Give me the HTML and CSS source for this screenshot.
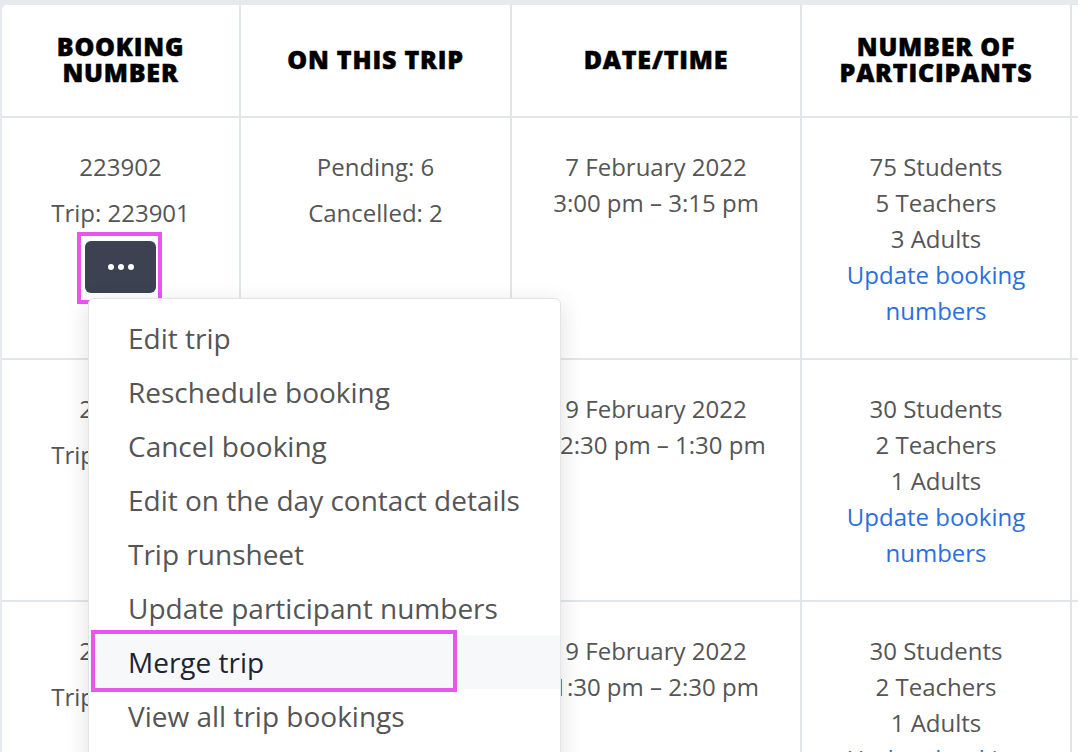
FILE: index.html
```html
<!DOCTYPE html>
<html lang="en">
<head>
  <meta charset="UTF-8">
  <meta name="viewport" content="width=device-width, initial-scale=1.0">
  <title>Bookings</title>
  <link rel="stylesheet" href="styles.css">
</head>
<body>
  <div class="card">
    <table class="bookings">
      <colgroup>
        <col class="col-booking">
        <col class="col-trip">
        <col class="col-date">
        <col class="col-people">
        <col class="col-extra">
      </colgroup>
      <thead>
        <tr>
          <th>Booking<br>number</th>
          <th>On this trip</th>
          <th>Date/time</th>
          <th>Number of<br>participants</th>
          <th></th>
        </tr>
      </thead>
      <tbody>
        <tr>
          <td>
            <p class="ref">223902</p>
            <p class="ref">Trip: 223901</p>
            <span class="marked">
              <button class="more-btn" aria-label="More actions"><i></i><i></i><i></i></button>
            </span>
          </td>
          <td>
            <p class="ref">Pending: 6</p>
            <p class="ref">Cancelled: 2</p>
          </td>
          <td>7 February 2022<br>3:00 pm – 3:15 pm</td>
          <td>75 Students<br>5 Teachers<br>3 Adults<br><a href="#">Update booking numbers</a></td>
          <td></td>
        </tr>
        <tr>
          <td>
            <p class="ref">223903</p>
            <p class="ref">Trip: 223903</p>
          </td>
          <td>
            <p class="ref">Pending: 2</p>
          </td>
          <td>9 February 2022<br>12:30 pm – 1:30 pm</td>
          <td>30 Students<br>2 Teachers<br>1 Adults<br><a href="#">Update booking numbers</a></td>
          <td></td>
        </tr>
        <tr>
          <td>
            <p class="ref">223904</p>
            <p class="ref">Trip: 223904</p>
          </td>
          <td>
            <p class="ref">Pending: 2</p>
          </td>
          <td>9 February 2022<br>1:30 pm – 2:30 pm</td>
          <td>30 Students<br>2 Teachers<br>1 Adults<br><a href="#">Update booking numbers</a></td>
          <td></td>
        </tr>
      </tbody>
    </table>

    <!-- Actions dropdown for the first booking -->
    <ul class="menu">
      <li>Edit trip</li>
      <li>Reschedule booking</li>
      <li>Cancel booking</li>
      <li>Edit on the day contact details</li>
      <li>Trip runsheet</li>
      <li>Update participant numbers</li>
      <li class="hover">Merge trip<span class="mark"></span></li>
      <li>View all trip bookings</li>
    </ul>
  </div>
</body>
</html>
```

FILE: styles.css
```css
html, body {
  margin: 0;
  height: 752px;
  overflow: hidden;
}
body {
  background-color: #e6eaee;
  font-family: "Open Sans", Arial, sans-serif;
  color: #555;
  padding: 5px 0 0 2px;
  box-sizing: border-box;
}
.card {
  position: relative;
  background: #fff;
  border-top-left-radius: 5px;
  width: 1200px;
  height: 800px;
  overflow: hidden;
}
.bookings {
  table-layout: fixed;
  border-collapse: separate;
  border-spacing: 0;
  width: 1200px;
}
.col-booking { width: 239px; }
.col-trip { width: 271px; }
.col-date { width: 290px; }
.col-people { width: 270px; }
.bookings th, .bookings td {
  border-right: 2px solid #e1e6ea;
  border-bottom: 2px solid #e1e6ea;
  text-align: center;
}
.bookings th {
  height: 113px;
  padding: 0 6px 4px;
  box-sizing: border-box;
  font-size: 25px;
  line-height: 26px;
  font-weight: 800;
  letter-spacing: 0.8px;
  -webkit-text-stroke: 0.5px #000;
  text-transform: uppercase;
  color: #000;
  vertical-align: middle;
}
.bookings td {
  padding: 31px 14px 29px;
  font-size: 24px;
  line-height: 36px;
  vertical-align: top;
}
.bookings td:last-child, .bookings th:last-child {
  border-right: none;
}
.ref {
  margin: 0 0 10px;
}
.bookings a {
  color: #2c6fdc;
  text-decoration: none;
}
.marked {
  position: relative;
  display: inline-block;
  vertical-align: top;
}
.marked::after {
  content: "";
  position: absolute;
  left: -8px;
  top: -9px;
  width: 85px;
  height: 72px;
  border: 4px solid #ea55f1;
  box-sizing: border-box;
}
.more-btn {
  display: inline-flex;
  align-items: center;
  justify-content: center;
  gap: 4px;
  width: 71px;
  height: 52px;
  border: none;
  border-radius: 6px;
  background-color: #3d4253;
  cursor: pointer;
  vertical-align: top;
}
.more-btn i {
  width: 6px;
  height: 6px;
  border-radius: 50%;
  background: #fff;
}
.menu {
  position: absolute;
  left: 86px;
  top: 293px;
  width: 473px;
  height: 480px;
  margin: 0;
  padding: 12px 0;
  list-style: none;
  background: #fff;
  border: 1px solid #e2e5e8;
  border-radius: 6px;
  box-shadow: 0 6px 24px rgba(0, 0, 0, 0.13);
  box-sizing: border-box;
}
.menu li {
  position: relative;
  height: 54px;
  padding-left: 39px;
  font-size: 28px;
  line-height: 54px;
  color: #555;
}
.menu li.hover {
  background-color: #f7f8fa;
  color: #1e2433;
}
.menu .mark {
  position: absolute;
  left: 2px;
  top: -5px;
  width: 366px;
  height: 62px;
  border: 4px solid #ea55f1;
  box-sizing: border-box;
}
```
